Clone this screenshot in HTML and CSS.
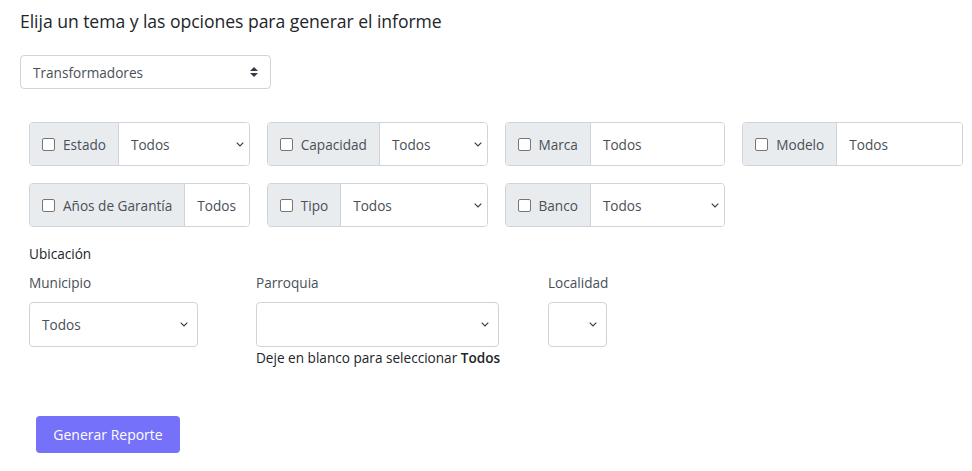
FILE: index.html
```html
<!DOCTYPE html>
<html lang="es">
<head>
<meta charset="utf-8">
<title>Informe</title>
<link rel="stylesheet" href="styles.css">
</head>
<body>
<main class="page">
  <h1 class="title">Elija un tema y las opciones para generar el informe</h1>
  <div class="select select-topic">
    <span>Transformadores</span>
    <svg class="updown" width="8" height="10" viewBox="0 0 8 10"><path d="M4 0 L8 4 H0 Z M4 10 L8 6 H0 Z" fill="#343a40"/></svg>
  </div>

  <div class="filters">
    <div class="igroup">
      <label class="ilabel"><span class="check"></span>Estado</label>
      <div class="ival"><span>Todos</span><svg class="chev" width="8" height="5" viewBox="0 0 8 5"><path d="M0.7 0.7 L4 4 L7.3 0.7" fill="none" stroke="#343a40" stroke-width="1.1"/></svg></div>
    </div>
    <div class="igroup">
      <label class="ilabel"><span class="check"></span>Capacidad</label>
      <div class="ival"><span>Todos</span><svg class="chev" width="8" height="5" viewBox="0 0 8 5"><path d="M0.7 0.7 L4 4 L7.3 0.7" fill="none" stroke="#343a40" stroke-width="1.1"/></svg></div>
    </div>
    <div class="igroup">
      <label class="ilabel"><span class="check"></span>Marca</label>
      <div class="ival"><span>Todos</span></div>
    </div>
    <div class="igroup">
      <label class="ilabel"><span class="check"></span>Modelo</label>
      <div class="ival"><span>Todos</span></div>
    </div>
    <div class="igroup">
      <label class="ilabel"><span class="check"></span>Años de Garantía</label>
      <div class="ival"><span>Todos</span></div>
    </div>
    <div class="igroup">
      <label class="ilabel"><span class="check"></span>Tipo</label>
      <div class="ival"><span>Todos</span><svg class="chev" width="8" height="5" viewBox="0 0 8 5"><path d="M0.7 0.7 L4 4 L7.3 0.7" fill="none" stroke="#343a40" stroke-width="1.1"/></svg></div>
    </div>
    <div class="igroup">
      <label class="ilabel"><span class="check"></span>Banco</label>
      <div class="ival"><span>Todos</span><svg class="chev" width="8" height="5" viewBox="0 0 8 5"><path d="M0.7 0.7 L4 4 L7.3 0.7" fill="none" stroke="#343a40" stroke-width="1.1"/></svg></div>
    </div>
  </div>

  <section class="location">
    <div class="loc-title">Ubicación</div>
    <div class="loc-row">
      <div class="field f-mun">
        <div class="flabel">Municipio</div>
        <div class="select tall"><span>Todos</span><svg class="chev" width="8" height="5" viewBox="0 0 8 5"><path d="M0.7 0.7 L4 4 L7.3 0.7" fill="none" stroke="#343a40" stroke-width="1.1"/></svg></div>
      </div>
      <div class="field f-par">
        <div class="flabel">Parroquia</div>
        <div class="select tall"><span></span><svg class="chev" width="8" height="5" viewBox="0 0 8 5"><path d="M0.7 0.7 L4 4 L7.3 0.7" fill="none" stroke="#343a40" stroke-width="1.1"/></svg></div>
        <div class="help">Deje en blanco para seleccionar <b>Todos</b></div>
      </div>
      <div class="field f-loc">
        <div class="flabel">Localidad</div>
        <div class="select tall"><span></span><svg class="chev" width="8" height="5" viewBox="0 0 8 5"><path d="M0.7 0.7 L4 4 L7.3 0.7" fill="none" stroke="#343a40" stroke-width="1.1"/></svg></div>
      </div>
    </div>
  </section>

  <button class="btn" type="button">Generar Reporte</button>
</main>
</body>
</html>
```

FILE: styles.css
```css
* { box-sizing: border-box; }
html, body { margin: 0; padding: 0; background: #fff; }
body {
  font-family: "Open Sans", "Noto Sans", sans-serif;
  color: #212529;
  font-size: 14px;
}
.page {
  padding: 8px 20px 0 20px;
}
.title {
  margin: 0;
  font-size: 17.6px;
  font-weight: 400;
  line-height: 26px;
  letter-spacing: -0.05px;
  color: #212529;
}
.select {
  display: flex;
  align-items: center;
  justify-content: space-between;
  border: 1px solid #ced4da;
  border-radius: 4px;
  background: #fff;
  color: #495057;
  font-size: 13.6px;
  padding: 0 9px 0 12px;
}
.select-topic {
  margin-top: 21px;
  width: 251px;
  height: 34px;
}
.updown { margin-right: 3px; }
.filters {
  margin: 33px 0 0 9px;
  width: 934px;
  display: grid;
  grid-template-columns: repeat(4, 1fr);
  column-gap: 17px;
  row-gap: 17px;
}
.igroup {
  display: flex;
  height: 44px;
  border: 1px solid #ced4da;
  border-radius: 4px;
  overflow: hidden;
  font-size: 13.6px;
}
.ilabel {
  display: flex;
  align-items: center;
  gap: 8px;
  padding: 0 12px;
  background: #e9ecef;
  border-right: 1px solid #ced4da;
  color: #495057;
  white-space: nowrap;
}
.check {
  width: 13px;
  height: 13px;
  border: 1.5px solid #767676;
  border-radius: 2px;
  background: #fff;
}
.ival {
  flex: 1;
  display: flex;
  align-items: center;
  justify-content: space-between;
  padding: 0 5px 0 12px;
  color: #495057;
  background: #fff;
  min-width: 0;
}
.chev { flex: none; }
.location {
  margin: 17px 0 0 9px;
}
.loc-title {
  line-height: 20px;
  color: #212529;
  font-size: 13.6px;
}
.loc-row {
  display: flex;
  margin-top: 9px;
}
.flabel {
  color: #495057;
  font-size: 13.6px;
  line-height: 20px;
  margin-bottom: 9px;
}
.select.tall { height: 45px; }
.f-mun { width: 169px; margin-right: 58px; }
.f-par { width: 243px; margin-right: 49px; }
.f-loc { width: 59px; }
.help {
  margin-top: 1px;
  font-size: 13.6px;
  line-height: 20px;
  color: #212529;
  white-space: nowrap;
}
.help b { font-weight: 600; }
.btn {
  margin: 48px 0 0 16px;
  width: 144px;
  height: 37px;
  border: none;
  border-radius: 4px;
  background: #7571f9;
  color: #fff;
  font-family: inherit;
  font-size: 14px;
  padding: 0;
  display: block;
}
```
